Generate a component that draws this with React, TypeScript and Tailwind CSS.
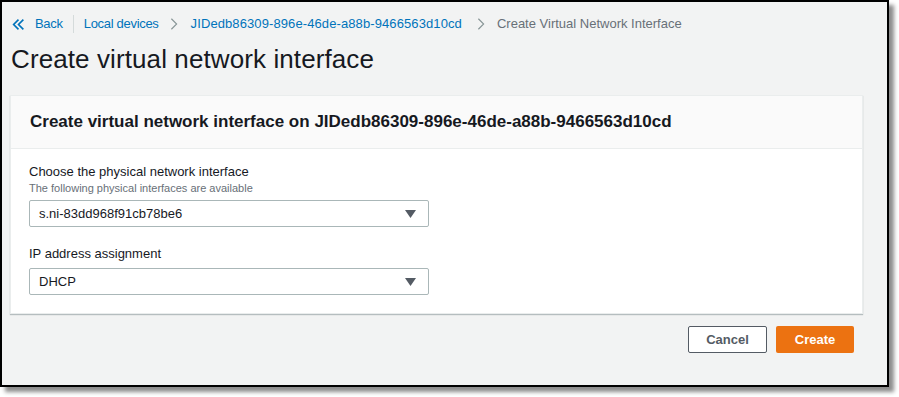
export default function App() {
  const deviceId = "JIDedb86309-896e-46de-a88b-9466563d10cd"

  return (
    <div className="w-[899px] h-[397px] bg-white overflow-hidden" style={{ fontFamily: '"Liberation Sans", Arial, sans-serif' }}>
      <div className="w-[889px] h-[387px] border-2 border-black bg-[#f2f3f3] shadow-[5px_5px_4px_rgba(0,0,0,0.45)] flex flex-col">
        {/* Breadcrumbs */}
        <div className="flex items-center h-[20px] mt-[12px] pl-[10px] text-[13px] text-[#0073bb]">
          <svg className="w-[13px] h-[13px]" viewBox="0 0 16 16" fill="none" stroke="#0073bb" strokeWidth={2}>
            <path d="M8 2L2 8l6 6M14 2L8 8l6 6" />
          </svg>
          <span className="ml-[10px] tracking-[-0.3px]">Back</span>
          <span className="mx-[10px] w-px h-[18px] bg-[#d5dbdb]"></span>
          <span className="tracking-[-0.3px]">Local devices</span>
          <svg className="w-[10px] h-[14px] ml-[10px] mr-[12px]" viewBox="0 0 10 16" fill="none" stroke="#879596" strokeWidth={1.3}>
            <path d="M2 2l6 6-6 6" />
          </svg>
          <span className="tracking-[0.1px]">{deviceId}</span>
          <svg className="w-[10px] h-[14px] ml-[14px] mr-[11px]" viewBox="0 0 10 16" fill="none" stroke="#879596" strokeWidth={1.3}>
            <path d="M2 2l6 6-6 6" />
          </svg>
          <span className="text-[#687078]">Create Virtual Network Interface</span>
        </div>

        {/* Title */}
        <h1 className="mt-[10px] ml-[9px] text-[26px] leading-[30px] font-light text-[#16191f] tracking-[0.1px]">Create virtual network interface</h1>

        {/* Panel */}
        <div className="mt-[21px] ml-[8px] mr-[24px] bg-white border border-[#eaeded] shadow-[0_1px_1px_rgba(0,28,36,0.25)]">
          <div className="h-[53px] flex items-center px-[19px] bg-[#fafafa] border-b border-[#eaeded]">
            <h2 className="text-[17px] font-bold text-[#16191f]">Create virtual network interface on {deviceId}</h2>
          </div>
          <div className="px-[18px] pt-[14px] pb-[18px]">
            <div className="text-[13px] text-[#16191f] leading-[18px]">Choose the physical network interface</div>
            <div className="text-[11px] text-[#687078] leading-[14px]">The following physical interfaces are available</div>
            <div className="mt-[5px] w-[400px] h-[27px] border border-[#aab7b8] rounded-[2px] flex items-center justify-between pl-[9px] pr-[12px] text-[13px] text-[#16191f]">
              <span>s.ni-83dd968f91cb78be6</span>
              <svg className="w-[11px] h-[8px]" viewBox="0 0 11 8" fill="#545b64"><path d="M0 0h11L5.5 8z" /></svg>
            </div>
            <div className="mt-[18px] text-[13px] text-[#16191f] leading-[18px]">IP address assignment</div>
            <div className="mt-[5px] w-[400px] h-[27px] border border-[#aab7b8] rounded-[2px] flex items-center justify-between pl-[9px] pr-[12px] text-[13px] text-[#16191f]">
              <span>DHCP</span>
              <svg className="w-[11px] h-[8px]" viewBox="0 0 11 8" fill="#545b64"><path d="M0 0h11L5.5 8z" /></svg>
            </div>
          </div>
        </div>

        {/* Actions */}
        <div className="flex justify-end gap-[9px] mt-[12px] mr-[33px]">
          <button className="w-[79px] h-[27px] border border-[#545b64] rounded-[2px] bg-white text-[13px] font-bold text-[#545b64]">Cancel</button>
          <button className="w-[78px] h-[27px] rounded-[2px] bg-[#ec7211] text-[13px] font-bold text-white">Create</button>
        </div>
      </div>
    </div>
  )
}
